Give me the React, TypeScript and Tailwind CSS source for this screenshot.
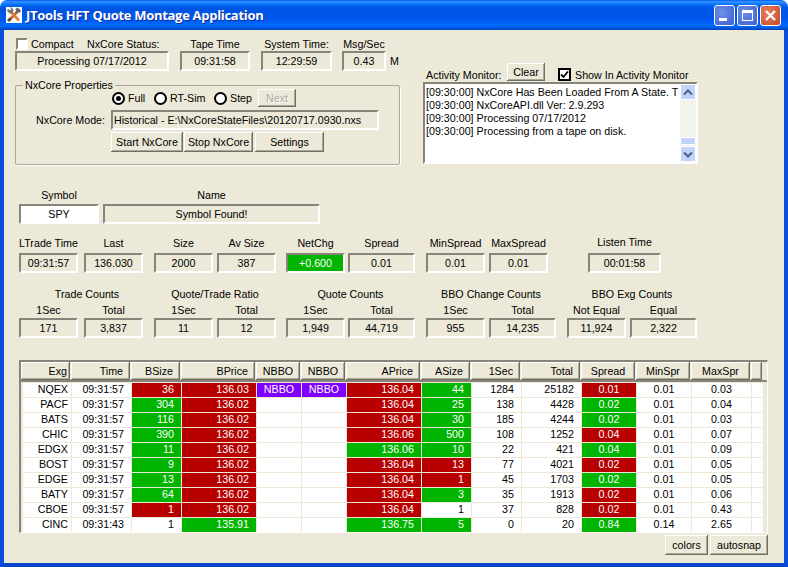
const raised = 'bg-[#ece9d8] shadow-[inset_-1px_-1px_#716f64,inset_1px_1px_#fff,inset_-2px_-2px_#aca899]'
const sunken = 'border-2 border-t-[#87857a] border-l-[#87857a] border-r-white border-b-white'

type Cell = { t: string; c?: 'r' | 'g' | 'p' }

const r = (t: string): Cell => ({ t, c: 'r' })
const g = (t: string): Cell => ({ t, c: 'g' })
const w = (t: string): Cell => ({ t })

const headers = ['Exg', 'Time', 'BSize', 'BPrice', 'NBBO', 'NBBO', 'APrice', 'ASize', '1Sec', 'Total', 'Spread', 'MinSpr', 'MaxSpr', '']
const rows: Cell[][] = [
  [w('NQEX'), w('09:31:57'), r('36'), r('136.03'), { t: 'NBBO', c: 'p' }, { t: 'NBBO', c: 'p' }, r('136.04'), g('44'), w('1284'), w('25182'), r('0.01'), w('0.01'), w('0.03'), w('')],
  [w('PACF'), w('09:31:57'), g('304'), r('136.02'), w(''), w(''), r('136.04'), g('25'), w('138'), w('4428'), g('0.02'), w('0.01'), w('0.04'), w('')],
  [w('BATS'), w('09:31:57'), g('116'), r('136.02'), w(''), w(''), r('136.04'), g('30'), w('185'), w('4244'), g('0.02'), w('0.01'), w('0.03'), w('')],
  [w('CHIC'), w('09:31:57'), g('390'), r('136.02'), w(''), w(''), r('136.06'), g('500'), w('108'), w('1252'), r('0.04'), w('0.01'), w('0.07'), w('')],
  [w('EDGX'), w('09:31:57'), g('11'), r('136.02'), w(''), w(''), g('136.06'), g('10'), w('22'), w('421'), g('0.04'), w('0.01'), w('0.09'), w('')],
  [w('BOST'), w('09:31:57'), g('9'), r('136.02'), w(''), w(''), r('136.04'), r('13'), w('77'), w('4021'), r('0.02'), w('0.01'), w('0.05'), w('')],
  [w('EDGE'), w('09:31:57'), g('13'), r('136.02'), w(''), w(''), r('136.04'), r('1'), w('45'), w('1703'), g('0.02'), w('0.01'), w('0.05'), w('')],
  [w('BATY'), w('09:31:57'), g('64'), r('136.02'), w(''), w(''), r('136.04'), g('3'), w('35'), w('1913'), r('0.02'), w('0.01'), w('0.06'), w('')],
  [w('CBOE'), w('09:31:57'), r('1'), r('136.02'), w(''), w(''), r('136.04'), w('1'), w('37'), w('828'), r('0.02'), w('0.01'), w('0.43'), w('')],
  [w('CINC'), w('09:31:43'), w('1'), g('135.91'), w(''), w(''), g('136.75'), g('5'), w('0'), w('20'), g('0.84'), w('0.14'), w('2.65'), w('')],
]

// text alignment per column
function align(i: number) {
  if (i === 0) return 'justify-end pr-[3px]'
  if (i === 4 || i === 5 || i === 10 || i === 11 || i === 12) return 'justify-center'
  return 'justify-end pr-[7px]'
}

function cellColor(c?: Cell['c']) {
  if (c === 'r') return 'bg-[#b80000] text-white'
  if (c === 'g') return 'bg-[#00b400] text-white'
  if (c === 'p') return 'bg-[#8000ff] text-white'
  return 'bg-white text-black'
}

function Stat({ label, value, className, green, labelPad = '' }: { label: string; value: string; className: string; green?: boolean; labelPad?: string }) {
  return (
    <div className={`flex flex-col items-center ${className}`}>
      <div className={`h-[15px] flex items-center whitespace-nowrap ${labelPad}`}>{label}</div>
      <div className={`w-full h-5 flex items-center justify-center ${sunken} ${green ? 'bg-[#00b400] text-white' : ''}`}>{value}</div>
    </div>
  )
}

function Radio({ label, on, className }: { label: string; on?: boolean; className: string }) {
  return (
    <div className={`flex items-center gap-[3px] ${className}`}>
      <div className="w-[13px] h-[13px] rounded-full border-2 border-black bg-white flex items-center justify-center">
        {on && <div className="w-[5px] h-[5px] rounded-full bg-black" />}
      </div>
      <span>{label}</span>
    </div>
  )
}

function Btn({ children, className }: { children: string; className: string }) {
  return <div className={`h-5 flex items-center justify-center ${raised} ${className}`}>{children}</div>
}

function ScrollBtn({ up }: { up?: boolean }) {
  return (
    <div className="h-[16px] rounded-[2px] border border-white bg-[#c3d3fb] flex items-center justify-center">
      <svg width="10" height="7" viewBox="0 0 10 7">
        <path d={up ? 'M1 5.5 L5 1.5 L9 5.5' : 'M1 1.5 L5 5.5 L9 1.5'} fill="none" stroke="#4d6185" strokeWidth="2" />
      </svg>
    </div>
  )
}

export default function App() {
  return (
    <div className="w-[788px] h-[567px] flex flex-col overflow-hidden bg-white text-[10.7px] leading-[13px] text-black font-['Liberation_Sans',Arial,sans-serif]">
      {/* title bar */}
      <div className="h-[30px] shrink-0 rounded-t-[7px] flex items-center pl-[6px] pr-[7px] bg-[linear-gradient(180deg,#0058ee_0%,#3593ff_6%,#127dff_12%,#0262ee_20%,#0054e3_30%,#0055eb_56%,#005bf5_70%,#026afe_82%,#0062ef_90%,#0052d6_95%,#0040ab_100%)]">
        <svg width="16" height="16" viewBox="0 0 16 16" className="bg-white">
          <path d="M12 4 L3 13.5" stroke="#c8662c" strokeWidth="2.6" />
          <path d="M4 4 L13 13.5" stroke="#d9833f" strokeWidth="2.6" />
          <path d="M1 4 L2 1.5 L4 3.5 L5.5 2 L3.5 0.5 L6 0.5 L7.5 3 L6.5 6 L4 6.5 Z" fill="#6f7378" />
          <path d="M9 2.5 L11.5 0.5 L15 3.5 L13.5 6 L12.5 5 L11 6.5 L9.5 5 L10.5 3.5 Z" fill="#5f6368" />
          <path d="M2 14 L4.5 11.5" stroke="#4a4a4a" strokeWidth="2.6" />
        </svg>
        <div className="ml-1 text-white text-[13px] font-bold tracking-[-0.3px] font-['Open_Sans',sans-serif] [text-shadow:1px_1px_#0f2f9c]">JTools HFT Quote Montage Application</div>
        <div className="ml-auto flex gap-[2px]">
          <div className="w-[21px] h-[21px] rounded-[3px] border border-white bg-[radial-gradient(circle_at_35%_35%,#6f8fe8,#3a5fd0)] flex items-end pl-1 pb-1">
            <div className="w-2 h-[3px] bg-white" />
          </div>
          <div className="w-[21px] h-[21px] rounded-[3px] border border-white bg-[radial-gradient(circle_at_35%_35%,#6f8fe8,#3a5fd0)] flex items-center justify-center">
            <div className="w-[11px] h-[11px] border border-t-[3px] border-white" />
          </div>
          <div className="w-[21px] h-[21px] rounded-[3px] border border-white bg-[radial-gradient(circle_at_35%_35%,#e5805f,#c9472a)] flex items-center justify-center">
            <svg width="13" height="13" viewBox="0 0 13 13">
              <path d="M2 2 L11 11 M11 2 L2 11" stroke="#fff" strokeWidth="2.4" />
            </svg>
          </div>
        </div>
      </div>

      {/* client area */}
      <div className="flex-1 border-x-4 border-b-4 border-x-[#0a4ee0] border-b-[#0a45d0] bg-[#ece9d8] pl-[11px]">
        <div className="flex">
          {/* left column */}
          <div className="w-[385px] pt-[6px]">
            <div className="flex">
              <div className="w-[154px]">
                <div className="h-[15px] flex items-center pt-px">
                  <div className={`ml-px w-3 h-3 bg-white ${sunken}`} />
                  <span className="ml-[3px] w-[56px]">Compact</span>
                  <span>NxCore Status:</span>
                </div>
                <div className={`h-5 flex items-center justify-center ${sunken}`}>Processing 07/17/2012</div>
              </div>
              <Stat label="Tape Time" value="09:31:58" className="w-[70px] ml-[11px]" labelPad="pt-px" />
              <Stat label="System Time:" value="12:29:59" className="w-[71px] ml-[11px]" labelPad="pt-px" />
              <Stat label="Msg/Sec" value="0.43" className="w-[44px] ml-[10px]" labelPad="pt-px" />
              <div className="self-end ml-1 h-5 flex items-center">M</div>
            </div>

            <div className="relative mt-[14px] h-[80px] border border-[#aca899] rounded-[2px] shadow-[1px_1px_#fff]">
              <div className="absolute left-[7px] -top-[7px] px-[2px] bg-[#ece9d8]">NxCore Properties</div>
              <div className="flex items-center h-[18px] mt-[3px] ml-[96px]">
                <Radio label="Full" on className="w-[42px]" />
                <Radio label="RT-Sim" className="w-[60px]" />
                <Radio label="Step" className="w-[44px]" />
                <div className={`w-[38px] h-[18px] flex items-center justify-center text-[#aca899] [text-shadow:1px_1px_#fff] ${raised}`}>Next</div>
              </div>
              <div className="flex items-center mt-[3px]">
                <div className="w-[89px] text-right">NxCore Mode:</div>
                <div className={`ml-[6px] w-[268px] h-5 flex items-center pl-[1px] ${sunken}`}>Historical - E:\NxCoreStateFiles\20120717.0930.nxs</div>
              </div>
              <div className="flex mt-[2px] ml-[95px]">
                <Btn className="w-[72px]">Start NxCore</Btn>
                <Btn className="w-[69px] ml-px">Stop NxCore</Btn>
                <Btn className="w-[69px] ml-[2px]">Settings</Btn>
              </div>
            </div>
          </div>

          {/* activity monitor */}
          <div className="ml-[23px] w-[275px] pt-[33px]">
            <div className="flex items-end h-[19px]">
              <span className="ml-[3px] w-[81px]">Activity Monitor:</span>
              <Btn className="w-[38px] !h-[18px] mb-px">Clear</Btn>
              <div className="ml-[13px] mb-[1px] w-[13px] h-[13px] border-2 border-black bg-white flex items-center justify-center">
                <svg width="9" height="9" viewBox="0 0 9 9">
                  <path d="M1 4.5 L3.5 7 L8 1.5" fill="none" stroke="#000" strokeWidth="1.8" />
                </svg>
              </div>
              <span className="ml-1">Show In Activity Monitor</span>
            </div>
            <div className={`h-[82px] flex bg-white ${sunken}`}>
              <div className="flex-1 overflow-hidden whitespace-nowrap pl-[1px] pt-[2px]">
                <div>[09:30:00] NxCore Has Been Loaded From A State. T</div>
                <div>[09:30:00] NxCoreAPI.dll Ver: 2.9.293</div>
                <div>[09:30:00] Processing 07/17/2012</div>
                <div>[09:30:00] Processing from a tape on disk.</div>
              </div>
              <div className="w-[16px] shrink-0 flex flex-col bg-[#f4f4ee]">
                <ScrollBtn up />
                <div className="flex-1 flex flex-col justify-end">
                  <div className="h-[8px] mb-[1px] rounded-[2px] border border-white bg-[#c3d3fb]" />
                </div>
                <ScrollBtn />
              </div>
            </div>
          </div>
        </div>

        {/* symbol */}
        <div className="flex mt-[23px] ml-[4px]">
          <div className="w-20 flex flex-col items-center">
            <div className="h-4 leading-[15px]">Symbol</div>
            <div className={`w-full h-5 bg-white flex items-center justify-center ${sunken}`}>SPY</div>
          </div>
          <div className="ml-[4px] w-[217px] flex flex-col items-center">
            <div className="h-4 leading-[15px]">Name</div>
            <div className={`w-full h-5 flex items-center justify-center ${sunken}`}>Symbol Found!</div>
          </div>
        </div>

        {/* trade stats */}
        <div className="flex mt-[14px] ml-[4px]">
          <Stat label="LTrade Time" value="09:31:57" className="w-[59px]" labelPad="pb-[5px]" />
          <Stat label="Last" value="136.030" className="w-[59px] ml-[6px]" labelPad="pb-[5px]" />
          <Stat label="Size" value="2000" className="w-[59px] ml-[11px]" labelPad="pb-[5px]" />
          <Stat label="Av Size" value="387" className="w-[59px] ml-[4px]" labelPad="pb-[5px]" />
          <Stat label="NetChg" value="+0.600" className="w-[59px] ml-[10px]" green labelPad="pb-[5px]" />
          <Stat label="Spread" value="0.01" className="w-[67px] ml-[3px]" labelPad="pb-[5px]" />
          <Stat label="MinSpread" value="0.01" className="w-[59px] ml-[11px]" labelPad="pb-[5px]" />
          <Stat label="MaxSpread" value="0.01" className="w-[59px] ml-[4px]" labelPad="pb-[5px]" />
          <Stat label="Listen Time" value="00:01:58" className="w-[73px] ml-[40px]" labelPad="pb-[7px]" />
        </div>

        {/* counts */}
        <div className="flex mt-[14px] ml-[4px]">
          <div className="w-[124px]">
            <div className="h-[16px] pt-px pl-[12px] text-center">Trade Counts</div>
            <div className="flex">
              <Stat label="1Sec" value="171" className="w-[59px]" />
              <Stat label="Total" value="3,837" className="w-[59px] ml-[6px]" />
            </div>
          </div>
          <div className="w-[122px] ml-[11px]">
            <div className="h-[16px] pt-px text-center">Quote/Trade Ratio</div>
            <div className="flex">
              <Stat label="1Sec" value="11" className="w-[59px]" />
              <Stat label="Total" value="12" className="w-[59px] ml-[4px]" />
            </div>
          </div>
          <div className="w-[129px] ml-[10px]">
            <div className="h-[16px] pt-px text-center">Quote Counts</div>
            <div className="flex">
              <Stat label="1Sec" value="1,949" className="w-[59px]" />
              <Stat label="Total" value="44,719" className="w-[67px] ml-[3px]" />
            </div>
          </div>
          <div className="w-[130px] ml-[11px]">
            <div className="h-[16px] pt-px text-center">BBO Change Counts</div>
            <div className="flex">
              <Stat label="1Sec" value="955" className="w-[59px]" />
              <Stat label="Total" value="14,235" className="w-[67px] ml-[4px]" />
            </div>
          </div>
          <div className="w-[130px] ml-[11px]">
            <div className="h-[16px] pt-px text-center">BBO Exg Counts</div>
            <div className="flex">
              <Stat label="Not Equal" value="11,924" className="w-[59px]" />
              <Stat label="Equal" value="2,322" className="w-[67px] ml-[4px]" />
            </div>
          </div>
        </div>

        {/* quote table */}
        <div className={`mt-[22px] ml-[4px] w-[749px] h-[173px] ${sunken} !border-r !border-b`}>
          <div className="grid grid-cols-[49px_59px_49px_74px_44px_44px_74px_49px_49px_59px_54px_54px_59px_11px] gap-x-px h-[18px] border-b-2 border-b-[#87857a] box-content">
            {headers.map((h, i) => (
              <div key={i} className={`flex items-center ${align(i)} ${raised}`}>{h}</div>
            ))}
          </div>
          <div className="mt-px ml-[2px] flex flex-col gap-y-px">
            {rows.map((row, ri) => (
              <div key={ri} className="grid grid-cols-[48px_59px_49px_74px_44px_44px_74px_49px_49px_59px_54px_54px_59px_11px] gap-x-px h-[14px]">
                {row.map((cell, ci) => (
                  <div key={ci} className={`flex items-center pb-px ${align(ci)} ${cellColor(cell.c)}`}>{cell.t}</div>
                ))}
              </div>
            ))}
          </div>
        </div>

        <div className="flex justify-end mt-[2px] mr-[16px] gap-[2px]">
          <Btn className="w-[43px]">colors</Btn>
          <Btn className="w-[58px]">autosnap</Btn>
        </div>
      </div>
    </div>
  )
}
